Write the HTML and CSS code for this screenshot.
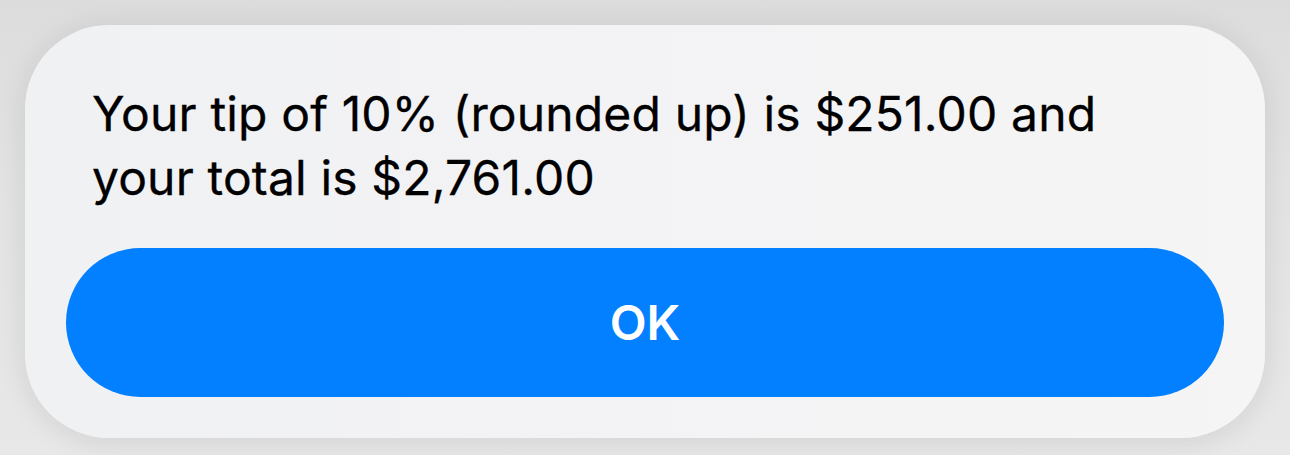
FILE: index.html
```html
<!DOCTYPE html>
<html lang="en">
<head>
<meta charset="utf-8">
<title>Tip result</title>
<link rel="stylesheet" href="styles.css">
</head>
<body>
  <div class="alert" role="alertdialog">
    <p class="alert-message">Your tip of 10% (rounded up) is $251.00 and your total is $2,761.00</p>
    <button class="alert-button" type="button">OK</button>
  </div>
</body>
</html>
```

FILE: styles.css
```css
html, body {
  margin: 0;
  height: 100%;
}

body {
  width: 1290px;
  height: 455px;
  box-sizing: border-box;
  padding: 25px;
  background: linear-gradient(180deg, #dcdcdc 0%, #e3e3e3 40%, #e8e8e8 100%);
  font-family: Inter, "Noto Sans", "Liberation Sans", sans-serif;
  overflow: hidden;
}

.alert {
  height: 413px;
  box-sizing: border-box;
  display: flex;
  flex-direction: column;
  padding: 57px 41px 41px;
  background: linear-gradient(90deg, #f0f1f3 0%, #f3f3f5 50%, #f5f5f5 100%);
  border-radius: 84px;
  box-shadow: 0 4px 30px rgba(0, 0, 0, 0.10);
}

.alert-message {
  margin: 0 0 0 26px;
  max-width: 1040px;
  font-size: 48px;
  line-height: 64px;
  font-weight: 400;
  color: #000;
  letter-spacing: 0.15px;
  -webkit-text-stroke: 0.3px #000;
}

.alert-button {
  margin-top: auto;
  height: 149px;
  border: 0;
  border-radius: 75px;
  background: #0380ff;
  color: #fff;
  font-family: inherit;
  font-size: 48px;
  font-weight: 600;
  cursor: pointer;
}
```
